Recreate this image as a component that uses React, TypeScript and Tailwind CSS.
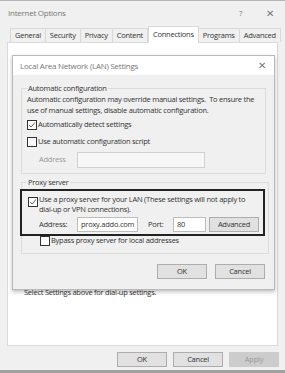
import React from 'react';

const font = { fontFamily: '"Open Sans", "Noto Sans", sans-serif' };

const Check = ({ checked }: { checked?: boolean }) => (
  <span className="w-[10px] h-[10px] border border-[#333] bg-white flex items-center justify-center shrink-0">
    {checked && (
      <svg viewBox="0 0 10 10" className="w-[8px] h-[8px]" fill="none" stroke="#333" strokeWidth="1">
        <path d="M1.5 5 L4 7.5 L8.5 2" />
      </svg>
    )}
  </span>
);

const Button = ({ label, disabled }: { label: string; disabled?: boolean }) => (
  <div
    className={`w-[50px] h-[15px] flex items-center justify-center border text-[7.5px] ${
      disabled ? 'bg-[#cccccc] border-[#cccccc] text-[#9a9a9a]' : 'bg-[#e1e1e1] border-[#adadad] text-[#333]'
    }`}
  >
    {label}
  </div>
);

const tabs = ['General', 'Security', 'Privacy', 'Content', 'Connections', 'Programs', 'Advanced'];

export default function App() {
  return (
    <div
      className="w-[285px] h-[373px] bg-[#f0f0f0] flex flex-col text-[#333] tracking-[-0.25px] overflow-hidden border-t border-[#b5b5b5]"
      style={font}
    >
      {/* title bar */}
      <div className="h-[24px] flex items-center pl-[8px] pr-[11px] text-[8px] text-[#777]">
        <span className="flex-1">Internet Options</span>
        <span className="mr-[24px]">?</span>
        <span className="text-[10px]">✕</span>
      </div>

      {/* tabs */}
      <div className="h-[17px] flex items-end pl-[10px] text-[7.5px]">
        {tabs.map((t) =>
          t === 'Connections' ? (
            <div
              key={t}
              className="h-[17px] px-[4px] bg-white border border-b-0 border-[#d9d9d9] flex items-center -mb-px relative z-10"
            >
              {t}
            </div>
          ) : (
            <div key={t} className="h-[14px] px-[4px] border border-b-0 border-[#d9d9d9] -ml-px first:ml-0 flex items-center">
              {t}
            </div>
          )
        )}
      </div>

      {/* panel */}
      <div className="mx-[7px] h-[304px] bg-white border border-[#d9d9d9] relative">
        <div className="pt-[244px] pl-[16px] text-[7.5px]">Select Settings above for dial-up settings.</div>

        {/* LAN dialog */}
        <div className="absolute left-[4px] top-[12px] w-[263px] h-[235px] bg-[#f0f0f0] border border-[#b9b9b9] shadow-[0_2px_4px_rgba(0,0,0,0.25)] flex flex-col text-[7.5px]">
          <div className="h-[19px] bg-white flex items-center pl-[7px] pr-[8px] text-[8px] text-[#777]">
            <span className="flex-1">Local Area Network (LAN) Settings</span>
            <span className="text-[10px]">✕</span>
          </div>

          <div className="px-[8px] pt-[8px] flex flex-col">
            <fieldset className="border border-[#dcdcdc] pl-[5px] pr-[4px] pb-[5px]">
              <legend className="px-[1px] leading-[10px]">Automatic configuration</legend>
              <p className="leading-[11px] mt-[1px]">
                Automatic configuration may override manual settings.&nbsp; To ensure the use of manual settings,
                disable automatic configuration.
              </p>
              <label className="flex items-center gap-[1px] mt-[3px] h-[12px]">
                <Check checked />
                Automatically detect settings
              </label>
              <label className="flex items-center gap-[1px] mt-[5px] h-[12px]">
                <Check />
                Use automatic configuration script
              </label>
              <div className="flex items-center mt-[4px] h-[16px] pl-[12px]">
                <span className="w-[38px] text-[#999]">Address</span>
                <span className="w-[128px] h-[16px] border border-[#d0d0d0] bg-[#f7f7f7]" />
              </div>
            </fieldset>

            <fieldset className="border border-[#dcdcdc] mt-[3px] pb-[6px]">
              <legend className="ml-[5px] px-[1px] leading-[10px]">Proxy server</legend>
              <div className="-ml-[2px] mr-[3px] mt-[2px] border-2 border-[#222] pl-[6px] pr-[4px] pt-[3px] pb-[2px]">
                <div className="flex items-start gap-[1px]">
                  <span className="mt-[3px]">
                    <Check checked />
                  </span>
                  <span className="leading-[10px]">
                    Use a proxy server for your LAN (These settings will not apply to dial-up or VPN connections).
                  </span>
                </div>
                <div className="flex items-center mt-[3px] pl-[11px]">
                  <span className="w-[38px]">Address:</span>
                  <span className="w-[61px] h-[15px] border border-[#bdbdbd] bg-white flex items-center pl-[3px] overflow-hidden whitespace-nowrap">
                    proxy.addo.com
                  </span>
                  <span className="ml-[10px] w-[25px]">Port:</span>
                  <span className="w-[33px] h-[15px] border border-[#bdbdbd] bg-white flex items-center pl-[3px]">80</span>
                  <span className="ml-[3px] w-[50px] h-[15px] bg-[#e1e1e1] border border-[#adadad] flex items-center justify-center">
                    Advanced
                  </span>
                </div>
              </div>
              <label className="flex items-center gap-[1px] -mt-[1px] ml-[18px] h-[12px]">
                <Check />
                Bypass proxy server for local addresses
              </label>
            </fieldset>

            <div className="flex justify-end gap-[8px] mt-[10px] pr-[1px]">
              <Button label="OK" />
              <Button label="Cancel" />
            </div>
          </div>
        </div>
      </div>

      {/* bottom buttons */}
      <div className="flex justify-end gap-[6px] pr-[6px] mt-[6px]">
        <Button label="OK" />
        <Button label="Cancel" />
        <Button label="Apply" disabled />
      </div>
      <div className="mt-auto h-[3px] bg-[#a0a0a0]" />
    </div>
  );
}
